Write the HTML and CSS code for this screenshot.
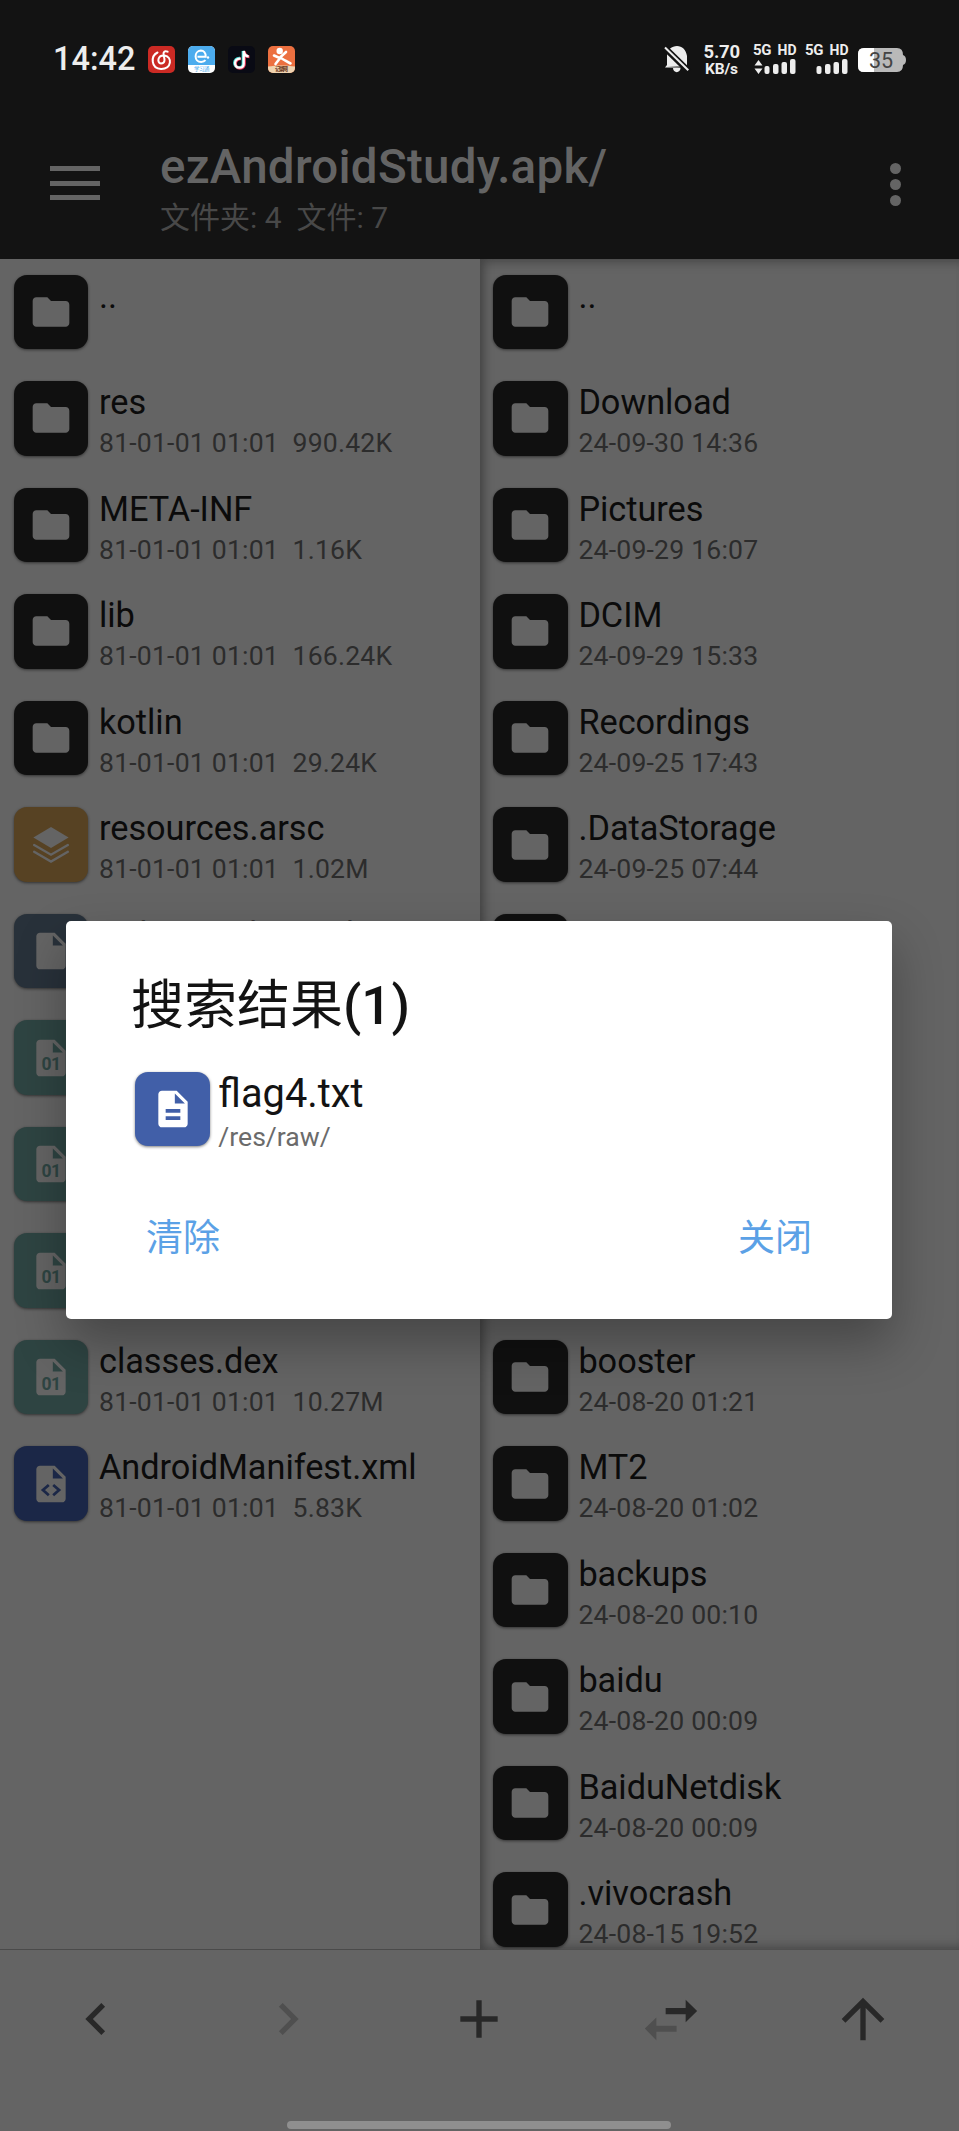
FILE: index.html
```html
<!DOCTYPE html>
<html lang="zh-CN">
<head>
<meta charset="utf-8">
<title>ezAndroidStudy.apk/</title>
<link rel="stylesheet" href="styles.css">
</head>
<body>
<svg class="defs" width="0" height="0">
  <symbol id="folder" viewBox="0 0 24 24"><path d="M10 4H4c-1.100 0-2 .9-2 2v12c0 1.100.9 2 2 2h16c1.100 0 2-.9 2-2V8c0-1.100-.9-2-2-2h-8l-2-2z"/></symbol>
  <symbol id="file" viewBox="0 0 24 24"><path fill-rule="evenodd" d="M6 2c-1.100 0-2 .9-2 2v16c0 1.100.9 2 2 2h12c1.100 0 2-.9 2-2V8l-6-6H6zm7 7V3.500L18.500 9H13z"/></symbol>
  <symbol id="doc" viewBox="0 0 24 24"><path fill-rule="evenodd" d="M14 2H6c-1.100 0-2 .9-2 2v16c0 1.100.9 2 2 2h12c1.100 0 2-.9 2-2V8l-6-6zm2 16H8v-2h8v2zm0-4H8v-2h8v2zm-3-5V3.500L18.500 9H13z"/></symbol>
  <symbol id="layers" viewBox="0 0 24 24"><path d="M12 2.200 2.400 7.900 12 13.700l9.600-5.800z"/><path d="m2.800 12 9.200 5.300 9.200-5.300M2.800 15.700 12 21l9.200-5.300" fill="none" stroke="currentColor" stroke-width="1.300" stroke-linecap="round"/></symbol>
</svg>
<div class="screen">
  <header class="status">
    <span class="clock">14:42</span>
    <div class="apps">
      <svg viewBox="0 0 27 27"><rect width="27" height="27" rx="5" fill="#cb2a24"/><path d="M9.500 6.500C2.500 10 2.800 22.500 13 23c11 .2 11.500-12.500 3.500-13.500-7-.8-7.800 7.500-3.500 8 4.500 0 3.800-4 2.600-8.500-.6-3 1-4.800 4-3.300" fill="none" stroke="#fff" stroke-width="2" stroke-linecap="round"/></svg>
      <svg viewBox="0 0 27 27"><rect width="27" height="27" rx="5" fill="#fff"/><path d="M0 19V5a5 5 0 0 1 5-5h17a5 5 0 0 1 5 5v14z" fill="#4cacee"/><path d="M9.500 10.800h8.200C18 6.500 15.500 4.600 12.800 4.600 5.800 5 5.800 16 13.200 16c2 0 3.300-.6 4.300-1.800" fill="none" stroke="#fff" stroke-width="2"/><circle cx="20" cy="11.500" r="1.200" fill="#fff"/><text x="6" y="25.300" font-size="5.500" textLength="15.500" fill="#4cacee">学习通</text></svg>
      <svg viewBox="0 0 27 27"><rect width="27" height="27" rx="5" fill="#090a14"/><g fill="none" stroke-width="2.700"><path d="M12 12.200c-7.500-.6-7 9.500-1 9.300 3 0 4-2 4-4V5c.4 3.500 2.300 5 5 5.100" stroke="#3fe0dc"/><path d="M13 13c-7-.6-7 9.500-1 9.300 3 0 4.500-2 4.500-4V5.500c.4 3.500 2 5.200 5 5.300" stroke="#ee3558"/><path d="M12.600 12.600c-7.500-.6-7 9.300-1.200 9.100 3 0 4.300-2 4.300-4V5c.4 3.500 2.200 5.300 5 5.400" stroke="#fff" stroke-width="2.300"/></g></svg>
      <svg viewBox="0 0 27 27"><rect width="27" height="27" rx="5" fill="#ec7040"/><path d="M0 20.500c8-1.500 19-1.500 27 0V22a5 5 0 0 1-5 5H5a5 5 0 0 1-5-5z" fill="#efd3b0"/><circle cx="11.700" cy="5" r="3.200" fill="#fff"/><path d="m6 9.500 5.500 2.500 6.500-6M12.500 11.500 7.500 18M13 12l4 2.500 5.500 3" fill="none" stroke="#fff" stroke-width="2.600" stroke-linecap="round"/><text x="7" y="25.400" font-size="5.500" font-weight="700" textLength="13" fill="#6b3a22">记录网</text></svg>
    </div>
    <div class="indicators">
      <svg class="bell" viewBox="0 0 26 28"><path d="M3 21.500h20V11C22 4.500 18 1 13 1S3 4.500 3 11v9l-2 2.500h22M9 23c0 5.500 7.500 5.500 7.500 0" fill="#ededed"/><path d="m1 3 24 23.500" stroke="#131313" stroke-width="6"/><path d="m1 2.500 23.300 22.800" stroke="#ededed" stroke-width="2"/></svg>
      <svg class="speed" viewBox="0 0 38 34"><text x="0.500" y="16" font-size="18.500" textLength="36.500">5.70</text><text x="2" y="31.500" font-size="15.500" textLength="33">KB/s</text></svg>
      <svg class="signal" viewBox="0 0 44 34"><text x="0" y="12.500" font-size="15" textLength="18.500">5G</text><text x="24.500" y="12.500" font-size="15" textLength="19" lengthAdjust="spacingAndGlyphs">HD</text><path d="m5.500 18 4 5.500h-8zm0 14-4-5.500h8z"/><rect x="11.500" y="24" width="5" height="8" rx="2"/><rect x="20" y="22" width="5.500" height="10" rx="2"/><rect x="28.500" y="20" width="5.500" height="12" rx="2"/><rect x="37" y="17" width="5.500" height="15" rx="2"/></svg>
      <svg class="signal" viewBox="0 0 44 34"><text x="0" y="12.500" font-size="15" textLength="18.500">5G</text><text x="24.500" y="12.500" font-size="15" textLength="19" lengthAdjust="spacingAndGlyphs">HD</text><rect x="11.500" y="24" width="5" height="8" rx="2"/><rect x="20" y="22" width="5.500" height="10" rx="2"/><rect x="28.500" y="20" width="5.500" height="12" rx="2"/><rect x="37" y="17" width="5.500" height="15" rx="2"/></svg>
      <svg class="battery" viewBox="0 0 48 24"><path d="M6 0h33q6 0 6 7 3 1 3 5t-3 5q0 7-6 7H6q-6 0-6-6V6q0-6 6-6" fill="#b9b9b9"/><path d="M16 0H6Q0 0 0 6v12q0 6 6 6h10z" fill="#fff"/><text class="level" x="11" y="19.500" font-size="21.500" textLength="24">35</text></svg>
    </div>
  </header>
  <div class="toolbar">
    <div class="menu"><i></i><i></i><i></i></div>
    <div class="titles"><h1>ezAndroidStudy.apk/</h1><p>文件夹: 4&nbsp; 文件: 7</p></div>
    <div class="more"><i></i><i></i><i></i></div>
  </div>
  <main class="panes">
    <ul class="pane left">
      <li><span class="tile"><svg><use href="#folder"/></svg></span><div><b>..</b></div></li>
      <li><span class="tile"><svg><use href="#folder"/></svg></span><div><b>res</b><small>81-01-01 01:01&nbsp; 990.42K</small></div></li>
      <li><span class="tile"><svg><use href="#folder"/></svg></span><div><b>META-INF</b><small>81-01-01 01:01&nbsp; 1.16K</small></div></li>
      <li><span class="tile"><svg><use href="#folder"/></svg></span><div><b>lib</b><small>81-01-01 01:01&nbsp; 166.24K</small></div></li>
      <li><span class="tile"><svg><use href="#folder"/></svg></span><div><b>kotlin</b><small>81-01-01 01:01&nbsp; 29.24K</small></div></li>
      <li><span class="tile arsc"><svg><use href="#layers"/></svg></span><div><b>resources.arsc</b><small>81-01-01 01:01&nbsp; 1.02M</small></div></li>
      <li><span class="tile bin"><svg><use href="#file"/></svg></span><div><b>DebugProbesKt.bin</b></div></li>
      <li><span class="tile dex"><svg><use href="#file"/></svg><em>01</em></span></li>
      <li><span class="tile dex"><svg><use href="#file"/></svg><em>01</em></span></li>
      <li><span class="tile dex"><svg><use href="#file"/></svg><em>01</em></span></li>
      <li><span class="tile dex"><svg><use href="#file"/></svg><em>01</em></span><div><b>classes.dex</b><small>81-01-01 01:01&nbsp; 10.27M</small></div></li>
      <li><span class="tile xml"><svg viewBox="0 0 24 24"><use href="#file"/><path class="cut" d="m10.800 12.500-3.200 2.800 3.200 2.800m2.400-5.600 3.200 2.800-3.200 2.800"/></svg></span><div><b>AndroidManifest.xml</b><small>81-01-01 01:01&nbsp; 5.83K</small></div></li>
    </ul>
    <ul class="pane right">
      <li><span class="tile"><svg><use href="#folder"/></svg></span><div><b>..</b></div></li>
      <li><span class="tile"><svg><use href="#folder"/></svg></span><div><b>Download</b><small>24-09-30 14:36</small></div></li>
      <li><span class="tile"><svg><use href="#folder"/></svg></span><div><b>Pictures</b><small>24-09-29 16:07</small></div></li>
      <li><span class="tile"><svg><use href="#folder"/></svg></span><div><b>DCIM</b><small>24-09-29 15:33</small></div></li>
      <li><span class="tile"><svg><use href="#folder"/></svg></span><div><b>Recordings</b><small>24-09-25 17:43</small></div></li>
      <li><span class="tile"><svg><use href="#folder"/></svg></span><div><b>.DataStorage</b><small>24-09-25 07:44</small></div></li>
      <li><span class="tile"></span></li>
      <li></li>
      <li></li>
      <li></li>
      <li><span class="tile"><svg><use href="#folder"/></svg></span><div><b>booster</b><small>24-08-20 01:21</small></div></li>
      <li><span class="tile"><svg><use href="#folder"/></svg></span><div><b>MT2</b><small>24-08-20 01:02</small></div></li>
      <li><span class="tile"><svg><use href="#folder"/></svg></span><div><b>backups</b><small>24-08-20 00:10</small></div></li>
      <li><span class="tile"><svg><use href="#folder"/></svg></span><div><b>baidu</b><small>24-08-20 00:09</small></div></li>
      <li><span class="tile"><svg><use href="#folder"/></svg></span><div><b>BaiduNetdisk</b><small>24-08-20 00:09</small></div></li>
      <li><span class="tile"><svg><use href="#folder"/></svg></span><div><b>.vivocrash</b><small>24-08-15 19:52</small></div></li>
    </ul>
  </main>
  <nav class="bottom">
    <div class="actions">
      <svg viewBox="0 0 24 24"><path d="M15.410 7.410 14 6l-6 6 6 6 1.410-1.410L10.830 12z"/></svg>
      <svg class="off" viewBox="0 0 24 24"><path d="M10 6 8.590 7.410 13.170 12l-4.580 4.590L10 18l6-6z"/></svg>
      <svg viewBox="0 0 24 24"><path d="M19 13h-6v6h-2v-6H5v-2h6V5h2v6h6z"/></svg>
      <svg viewBox="0 0 24 24"><path d="M10 7.900h7.500V4.800L21.800 9l-4.300 4.200v-3H10z"/><path class="off" d="M14.100 14.500H6.500v-3.100l-4.300 4.200 4.300 4.400v-3.200h7.600z"/></svg>
      <svg viewBox="0 0 24 24"><path d="m4 12 1.410 1.410L11 7.830V20h2V7.830l5.580 5.590L20 12l-8-8z"/></svg>
    </div>
    <div class="home"></div>
  </nav>
  <section class="dialog">
    <h2><span class="cjk">搜索结果</span>(1)</h2>
    <div class="result">
      <span class="tile txt"><svg><use href="#doc"/></svg></span>
      <div><b>flag4.txt</b><small>/res/raw/</small></div>
    </div>
    <div class="buttons"><span>清除</span><span>关闭</span></div>
  </section>
</div>
</body>
</html>
```
FILE: styles.css
```css
* { box-sizing: border-box; margin: 0; padding: 0; }
body { font-family: Roboto, "Noto Sans CJK SC", sans-serif; background: #646464; }
.defs { display: block; position: absolute; }
.screen { position: relative; width: 959px; height: 2131px; overflow: hidden; display: flex; flex-direction: column; }

.status { height: 118px; background: #131313; display: flex; align-items: center; padding-left: 53px; }
.clock { width: 95px; font-size: 32.500px; font-weight: 500; color: #ededed; line-height: 40px; }
.apps { display: flex; gap: 13px; }
.apps svg { width: 27px; height: 27px; }
.indicators { margin-left: auto; display: flex; align-items: center; padding-right: 53px; fill: #ededed; font-weight: 700; }
.indicators svg { flex: none; overflow: visible; }
.bell { width: 26px; height: 28px; margin-right: 13px; }
.speed { width: 38px; height: 34px; margin-right: 12px; }
.signal { width: 44px; height: 34px; margin-right: 8px; }
.signal + .battery { margin-left: 1px; }
.battery { width: 48px; height: 24px; margin-top: 2px; }
.level { fill: #444; font-weight: 400; }

.toolbar { height: 141px; background: #131313; display: flex; padding-left: 49.500px; }
.menu { width: 110.500px; display: flex; flex-direction: column; gap: 9.500px; padding-top: 48px; }
.menu i { width: 50px; height: 5px; background: #646464; }
.titles { flex: 1; padding-top: 21px; }
h1 { font-size: 47.500px; line-height: 56px; font-weight: 500; letter-spacing: .25px; color: #646464; white-space: nowrap; }
.titles p { font-size: 30px; line-height: 40px; margin-top: 3px; color: #484848; }
.more { width: 69px; padding-top: 45px; display: flex; flex-direction: column; gap: 5px; }
.more i { width: 11px; height: 11px; border-radius: 50%; background: #646464; }

.panes { height: 1691px; display: flex; overflow: hidden; }
.pane { list-style: none; flex: 1; height: 1691px; overflow: hidden; padding-left: 13.700px; border-bottom: 1px solid #4a4a4a; }
.right { padding-left: 13.500px; border: 0; box-shadow: inset 12px 0 10px -8px #444, inset 0 12px 10px -8px #4a4a4a, inset 0 -12px 10px -8px #4a4a4a; }
.pane li { height: 106.530px; display: flex; padding-top: 15.700px; }
.tile { position: relative; flex: none; width: 74.500px; height: 74.500px; border-radius: 13px; background: #101010; color: #646464; display: flex; align-items: center; justify-content: center; box-shadow: 0 1px 3px rgba(0,0,0,.5); }
.tile svg { width: 44px; height: 44px; fill: currentColor; }
.tile em { position: absolute; left: 0; right: 0; top: 35px; text-align: center; font: 700 17.500px/18px Roboto, sans-serif; letter-spacing: -.5px; color: #2e4442; }
.arsc { background: #574223; }
.bin { background: #28313a; }
.dex { background: #2e4442; }
.xml { background: #1b2747; }
.cut { fill: none; stroke: #1b2747; stroke-width: 1.500; }
.pane div { padding: 1px 0 0 10.800px; }
b, small { display: block; font-weight: 400; white-space: nowrap; }
.pane b { font-size: 34.300px; line-height: 40px; letter-spacing: -.03px; color: #0b0b0b; }
small { font-size: 26.600px; line-height: 32px; letter-spacing: .2px; margin-top: 5px; color: #2c2c2c; }

.bottom { flex: 1; display: flex; flex-direction: column; background: #646464; }
.actions { height: 138px; display: grid; grid-template-columns: repeat(5, 1fr); align-items: center; justify-items: center; }
.actions svg { width: 64px; height: 64px; fill: #282828; }
.actions .off { fill: #4f4f4f; }
.home { width: 384px; height: 8px; margin: 33px 0 0 287px; border-radius: 4px; background: #8f8f8f; }

.dialog { position: absolute; left: 66px; top: 921px; width: 826px; height: 398px; border-radius: 5px; background: #fff; padding: 47px 66px 0 65px; box-shadow: 0 24px 50px rgba(0,0,0,.3); }
h2 { font-size: 53px; line-height: 76px; font-weight: 500; color: #131313; }
.cjk { font-weight: 400; }
.result { display: flex; padding: 27.500px 0 0 4.300px; }
.txt { background: #415fa8; color: #fff; }
.result div { padding-left: 8.500px; }
.result b { font-size: 39.500px; line-height: 44px; letter-spacing: .01px; font-variant-ligatures: common-ligatures; color: #131313; }
.result b { font-size: 39.800px; letter-spacing: normal; }
.result small { color: #6b6b6b; margin-top: 5px; letter-spacing: 0; }
.buttons { display: flex; justify-content: space-between; padding: 59px 14px 0 15px; font-size: 37px; line-height: 54px; color: #5ba1e6; }
```
